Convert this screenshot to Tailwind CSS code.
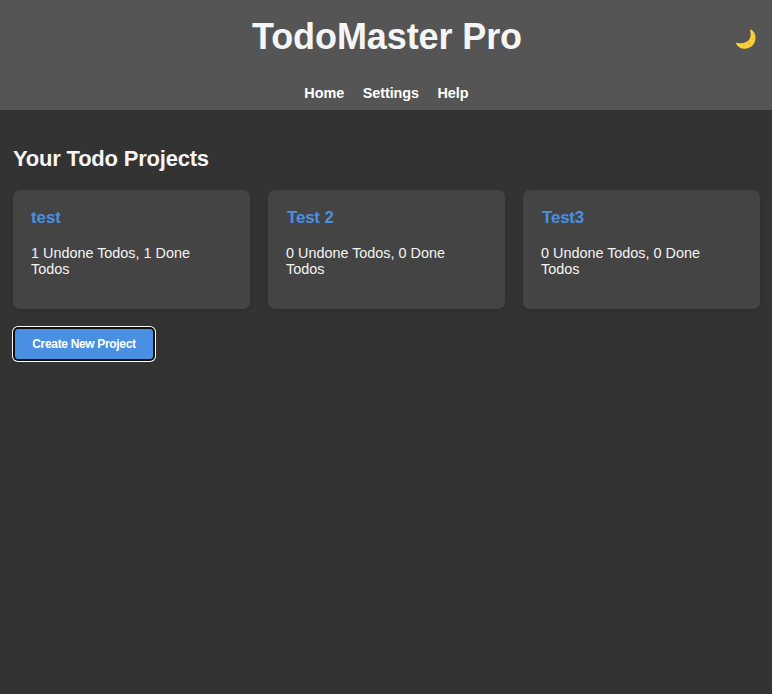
<!DOCTYPE html>
<html lang="en"><head><meta charset="utf-8"><title>TodoMaster Pro</title>
<script src="https://cdn.jsdelivr.net/npm/@tailwindcss/browser@4"></script></head>
<body class="min-h-screen bg-[#333] font-['Liberation_Sans',Arial,sans-serif] text-[14.4px] leading-4 text-[#f5f5f5]">
<header class="relative h-[110px] bg-[#555] pt-4 text-center">
<h1 class="pl-[2px] text-[36px] leading-[41px] font-bold tracking-[-0.1px]">TodoMaster Pro</h1>
<nav class="mt-7 flex justify-center gap-[18.500px] pl-px font-bold text-white"><a>Home</a><a class="tracking-[-0.080px]">Settings</a><a>Help</a></nav>
<button class="absolute right-[15px] top-[28px]" aria-label="Toggle theme"><svg width="22" height="22" viewBox="0 0 22 22"><path d="M16.300 1.800C21 4.500 22 12 18 17C13 22.500 4 22 1.200 15.800C.8 14.600 1.600 14.600 2.500 14.900C8 16 12.500 14.500 14.700 10.800C16.200 8 15.800 5.500 15.200 3C14.900 1.800 15.500 1.300 16.300 1.800Z" fill="#fdd13a"/><g fill="#f4b92f"><circle cx="14" cy="15.300" r="1.600"/><circle cx="17.700" cy="11" r="1.100"/><circle cx="9" cy="17.800" r="1.100"/><circle cx="17.800" cy="6.800" r=".7"/></g></svg></button>
</header>
<main class="px-[13px] pt-9">
<h2 class="text-[22px] leading-[25px] font-bold tracking-[-0.210px]">Your Todo Projects</h2>
<section class="mt-[19px] grid grid-cols-[237px_237px_237px] gap-[18px]">
<article class="h-[119px] rounded-[7px] bg-[#444] p-[18px] shadow-[0_2px_4px_#0000001a]"><h3 class="text-[16.800px] leading-[19px] font-bold text-[#4a90e2]">test</h3><p class="mt-[18px]">1 Undone Todos, 1 Done Todos</p></article>
<article class="h-[119px] rounded-[7px] bg-[#444] p-[18px] shadow-[0_2px_4px_#0000001a]"><h3 class="pl-px text-[16.800px] leading-[19px] font-bold tracking-[-0.100px] text-[#4a90e2]">Test 2</h3><p class="mt-[18px]">0 Undone Todos, 0 Done Todos</p></article>
<article class="h-[119px] rounded-[7px] bg-[#444] p-[18px] shadow-[0_2px_4px_#0000001a]"><h3 class="pl-px text-[16.800px] leading-[19px] font-bold tracking-[-0.100px] text-[#4a90e2]">Test3</h3><p class="mt-[18px]">0 Undone Todos, 0 Done Todos</p></article>
</section>
<button class="mt-5 ml-[2px] block h-[30px] w-[138px] rounded-[3px] bg-[#4a90e2] text-[12px] font-bold tracking-[-0.330px] text-white shadow-[0_0_0_2px_#101010,0_0_0_3px_#fff]">Create New Project</button>
</main></body></html>
